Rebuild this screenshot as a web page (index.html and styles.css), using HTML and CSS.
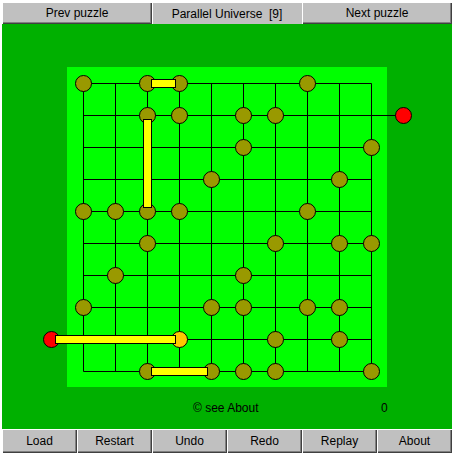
FILE: index.html
```html
<!DOCTYPE html>
<html>
<head>
<meta charset="utf-8">
<link rel="stylesheet" href="styles.css">
</head>
<body>
<div class="app">
  <div class="topbar">
    <div class="btn">Prev puzzle</div>
    <div class="title">Parallel Universe&nbsp; [9]</div>
    <div class="btn">Next puzzle</div>
  </div>
  <div class="field">
    <svg class="board" width="450" height="374" viewBox="2 24 450 374" xmlns="http://www.w3.org/2000/svg">
      <rect x="67" y="67" width="320" height="320" fill="#00ff00"/>
      <g stroke="#000" stroke-width="1" fill="none" id="grid"></g>
      <g id="dots" stroke="#000" stroke-width="1"></g>
      <g id="bars" fill="#ffff00" stroke="#000" stroke-width="1">
        <rect x="151.5" y="79.5" width="24" height="8"/>
        <rect x="143.5" y="119.5" width="8" height="88"/>
        <rect x="55.5" y="335.5" width="120" height="8"/>
        <rect x="151.5" y="367.5" width="56" height="8"/>
      </g>
    </svg>
    <div class="status">
      <span class="copy">© see About</span>
      <span class="score">0</span>
    </div>
  </div>
  <div class="bottombar">
    <div class="btn">Load</div>
    <div class="btn">Restart</div>
    <div class="btn">Undo</div>
    <div class="btn">Redo</div>
    <div class="btn">Replay</div>
    <div class="btn">About</div>
  </div>
</div>
<script src="script.js"></script>
</body>
</html>
```
FILE: styles.css
```css
html, body {
  margin: 0;
  padding: 0;
  background: #ffffff;
}
body {
  width: 460px;
  height: 456px;
  overflow: hidden;
  font-family: "Liberation Sans", Arial, sans-serif;
  font-size: 12px;
  color: #000;
}
.app {
  margin: 2px 0 0 2px;
  width: 450px;
  display: flex;
  flex-direction: column;
}
.topbar {
  display: flex;
  height: 22px;
}
.topbar > div {
  flex: 1 1 0;
  display: flex;
  align-items: center;
  justify-content: center;
  background: #c0c0c0;
}
.btn {
  box-shadow: inset 1px 1px #ffffff, inset -1px -1px #404040, inset -2px -2px #808080;
}
.topbar .title {
  box-shadow: inset 1px 1px #ffffff;
  padding-top: 1px;
}
.field {
  background: #00b000;
  height: 405px;
  display: flex;
  flex-direction: column;
}
.board {
  display: block;
}
.status {
  height: 20px;
  line-height: 20px;
  display: flex;
  padding-left: 191px;
}
.copy {
  width: 188px;
}
.bottombar {
  display: flex;
  height: 24px;
}
.bottombar .btn {
  flex: 1 1 0;
  display: flex;
  align-items: center;
  justify-content: center;
  background: #c0c0c0;
}
```
FILE: script.js
```js
(function(){
  var NS="http://www.w3.org/2000/svg";
  var g=document.getElementById("grid");
  function c(i){return 83.5+32*i;}
  function line(x1,y1,x2,y2){var l=document.createElementNS(NS,"line");l.setAttribute("x1",x1);l.setAttribute("y1",y1);l.setAttribute("x2",x2);l.setAttribute("y2",y2);g.appendChild(l);}
  for(var i=0;i<10;i++){line(c(i),c(0),c(i),c(9));line(c(0),c(i),c(9),c(i));}
  line(c(9),c(1),c(10),c(1));
  line(c(-1),c(8),c(0),c(8));
  var dots=[[0,0],[2,0],[3,0],[7,0],[2,1],[3,1],[5,1],[6,1],[5,2],[9,2],[4,3],[8,3],
    [0,4],[1,4],[2,4],[3,4],[7,4],[2,5],[6,5],[8,5],[9,5],[1,6],[5,6],
    [0,7],[4,7],[5,7],[7,7],[8,7],[6,8],[8,8],[2,9],[4,9],[5,9],[6,9],[9,9]];
  var d=document.getElementById("dots");
  function dot(x,y,col){var e=document.createElementNS(NS,"circle");e.setAttribute("cx",c(x));e.setAttribute("cy",c(y));e.setAttribute("r","8");e.setAttribute("fill",col);d.appendChild(e);}
  dots.forEach(function(p){dot(p[0],p[1],"#999900");});
  dot(10,1,"#ff0000");
  dot(-1,8,"#ff0000");
  dot(3,8,"#ffc800");
})();
```
